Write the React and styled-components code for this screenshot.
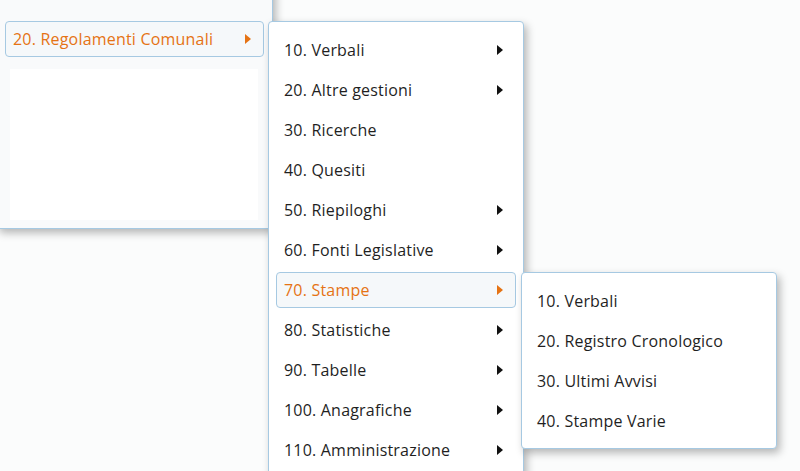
import React from 'react';
import styled, { createGlobalStyle } from 'styled-components';

const GlobalStyle = createGlobalStyle`
    html, body {
        margin: 0;
        padding: 0;
        background: #fbfcfc;
        font-family: "Open Sans", "Liberation Sans", sans-serif;
    }
`;

const Stage = styled.div`
    position: relative;
    width: 800px;
    height: 471px;
    overflow: hidden;
    background: #fbfcfc;
`;

const Panel = styled.ul`
    width: ${props => props.width}px;
    box-sizing: border-box;
    margin: 0;
    padding: ${props => props.pad || '8px 7px 7px'};
    list-style: none;
    display: flex;
    flex-direction: column;
    background: ${props => props.shade || '#fff'};
    border: 1px solid #a6c9e2;
    border-radius: 4px;
    box-shadow: 3px 4px 8px rgba(0, 0, 0, 0.28);
`;

// the root menu lies over the page, partly pushed off its top-left corner
const RootPanel = styled(Panel)`
    position: absolute;
    top: -22px;
    left: -4px;
`;

// a cascading submenu opens beside the row that owns it
const SubPanel = styled(Panel)`
    position: absolute;
    top: 2px;
    left: calc(100% + ${props => props.gap}px);
    z-index: 2;
`;

const Row = styled.li`
    position: relative;
    height: 40px;
    display: flex;
    align-items: center;
`;

const ItemBox = styled.div`
    flex: 1;
    height: 36px;
    box-sizing: border-box;
    display: flex;
    align-items: center;
    justify-content: space-between;
    padding: 0 12px 0 7px;
    border: 1px solid ${props => props.active ? '#a6c9e2' : 'transparent'};
    border-radius: 4px;
    background: ${props => props.active ? '#f5f8fa' : 'transparent'};
    color: ${props => props.active ? '#e57314' : '#1f1f1f'};
    font-size: 16px;
    letter-spacing: 0.2px;
    white-space: nowrap;
`;

const Blank = styled.div`
    height: 151px;
    margin: 10px 6px 0 5px;
    background: #fff;
`;

const Arrow = ({ color }) => (
    <svg width="6" height="10" viewBox="0 0 6 10">
        <path d="M0 0 L6 5 L0 10 Z" fill={color} />
    </svg>
);

const MenuItem = ({ label, sub, active, children }) => (
    <Row>
        <ItemBox active={active}>
            <span>{label}</span>
            {sub ? <Arrow color={active ? '#e57314' : '#111'} /> : null}
        </ItemBox>
        {children}
    </Row>
);

const second = [
    ['10. Verbali', true],
    ['20. Altre gestioni', true],
    ['30. Ricerche', false],
    ['40. Quesiti', false],
    ['50. Riepiloghi', true],
    ['60. Fonti Legislative', true],
    ['70. Stampe', true, true],
    ['80. Statistiche', true],
    ['90. Tabelle', true],
    ['100. Anagrafiche', true],
    ['110. Amministrazione', true],
];

const third = ['10. Verbali', '20. Registro Cronologico', '30. Ultimi Avvisi', '40. Stampe Varie'];

const App = () => (
    <>
        <GlobalStyle />
        <Stage>
            <RootPanel width={277} pad="40px 8px 8px" shade="#f9fafb">
                <MenuItem label="20. Regolamenti Comunali" sub active>
                    <SubPanel width={256} gap={4} pad="8px 7px 40px">
                        {second.map(([label, sub, active]) => (
                            <MenuItem key={label} label={label} sub={sub} active={active}>
                                {active ? (
                                    <SubPanel width={256} gap={5}>
                                        {third.map(t => (
                                            <MenuItem key={t} label={t} />
                                        ))}
                                    </SubPanel>
                                ) : null}
                            </MenuItem>
                        ))}
                    </SubPanel>
                </MenuItem>
                <Blank />
            </RootPanel>
        </Stage>
    </>
);

export default App;
